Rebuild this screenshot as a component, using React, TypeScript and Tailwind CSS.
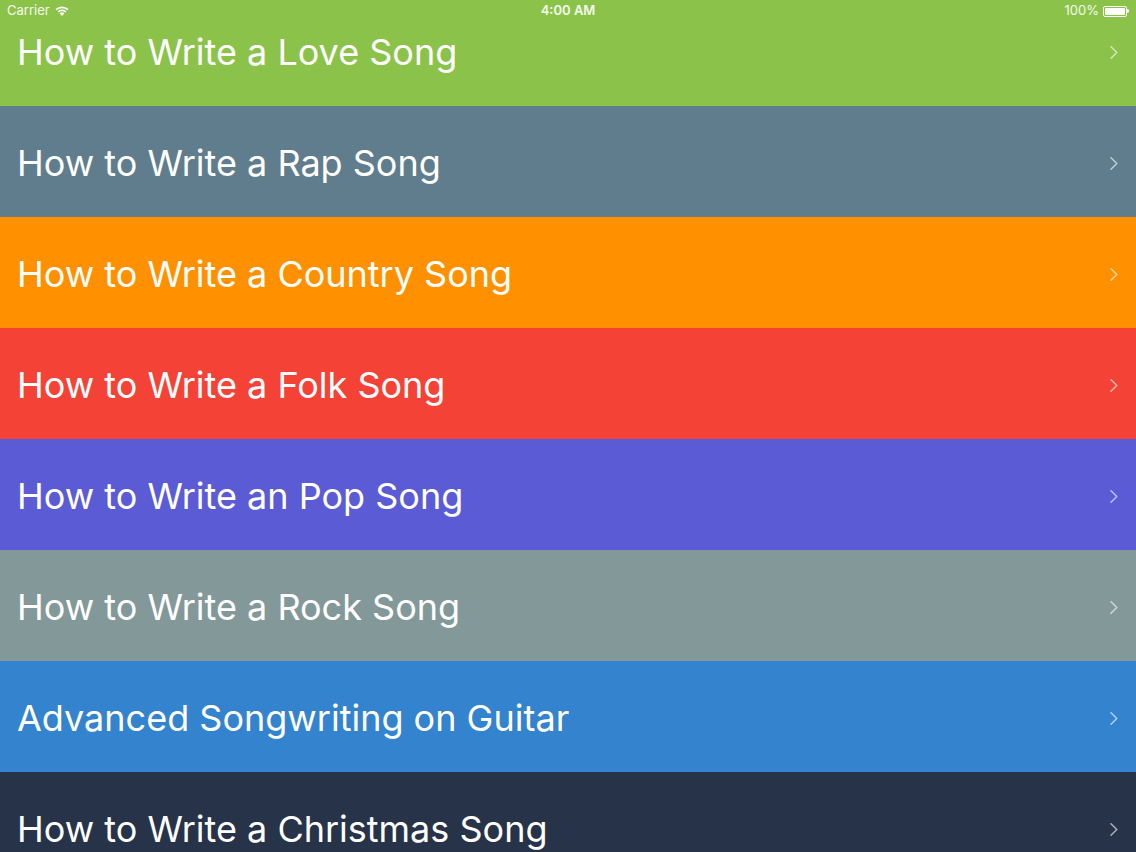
import { useState } from 'react';

type Lesson = { title: string; bg: string };

// Row colours are written out so Tailwind picks them up.
const lessons: Lesson[] = [
  { title: 'How to Write a Love Song', bg: 'bg-[#8bc34a]' },
  { title: 'How to Write a Rap Song', bg: 'bg-[#5f7d8c]' },
  { title: 'How to Write a Country Song', bg: 'bg-[#ff9100]' },
  { title: 'How to Write a Folk Song', bg: 'bg-[#f44336]' },
  { title: 'How to Write an Pop Song', bg: 'bg-[#5b5bd6]' },
  { title: 'How to Write a Rock Song', bg: 'bg-[#839898]' },
  { title: 'Advanced Songwriting on Guitar', bg: 'bg-[#3383cf]' },
  { title: 'How to Write a Christmas Song', bg: 'bg-[#263348]' },
];

const Chevron = () => (
  <svg width="10" height="15" viewBox="0 0 10 15" fill="none">
    <path d="M2 1.8 L7.8 7.5 L2 13.2" stroke="rgba(255,255,255,0.6)" strokeWidth="1.6" strokeLinecap="round" strokeLinejoin="round" />
  </svg>
);

const StatusBar = () => (
  <div className="absolute left-0 right-0 top-0 z-10 flex h-[22px] items-center justify-between px-[7px] text-[13px] text-white/90 font-['Inter','Liberation_Sans',sans-serif]">
    <div className="flex w-[200px] items-center gap-[5px]">
      <span>Carrier</span>
      <svg width="14" height="10" viewBox="0 0 14 10" fill="white">
        <path d="M7 10 L4.6 7.4 A3.4 3.4 0 0 1 9.4 7.4 Z" />
        <path d="M2.6 5.3 A6.4 6.4 0 0 1 11.4 5.3 L10.3 6.5 A4.8 4.8 0 0 0 3.7 6.5 Z" />
        <path d="M0.5 3.1 A9.4 9.4 0 0 1 13.5 3.1 L12.4 4.3 A7.8 7.8 0 0 0 1.6 4.3 Z" />
      </svg>
    </div>
    <span className="font-semibold">4:00 AM</span>
    <div className="flex w-[200px] items-center justify-end gap-[4px]">
      <span>100%</span>
      <div className="flex items-center">
        <div className="h-[11px] w-[24px] rounded-[2px] border border-white p-[1px]">
          <div className="h-full w-full rounded-[1px] bg-white" />
        </div>
        <div className="h-[4px] w-[2px] rounded-r-sm bg-white" />
      </div>
    </div>
  </div>
);

const App = () => {
  const [active, setActive] = useState<number | null>(null);

  return (
    <div className="relative h-[852px] w-[1136px] overflow-hidden bg-[#263348] font-['Inter','Liberation_Sans',sans-serif]">
      <StatusBar />
      <ul className="-mt-[5px]">
        {lessons.map((l, i) => (
          <li
            key={l.title}
            onClick={() => setActive(i)}
            className={`flex h-[111px] items-center justify-between pl-[17px] pr-[17px] pt-[3px] ${l.bg} ${active === i ? 'brightness-95' : ''}`}
          >
            <span className="text-[36px] font-normal text-white">{l.title}</span>
            <Chevron />
          </li>
        ))}
      </ul>
    </div>
  );
};

export default App;
